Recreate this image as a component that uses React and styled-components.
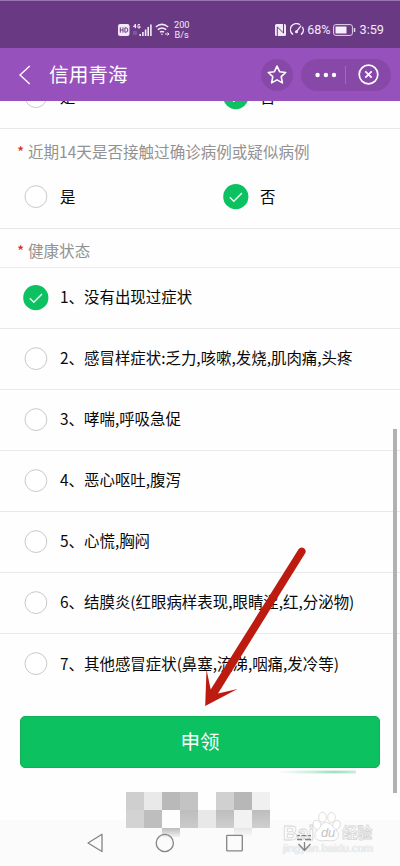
import React from "react";
import styled, { createGlobalStyle } from "styled-components";

const GlobalStyle = createGlobalStyle`
  * { box-sizing: border-box; }
  body { margin: 0; background: #fff; font-family: "Noto Sans CJK SC", sans-serif; }
`;

const Screen = styled.div`
  position: relative;
  display: flex;
  flex-direction: column;
  width: 400px;
  height: 866px;
  overflow: hidden;
  background: #fefefe;
`;

const StatusBar = styled.div`
  display: flex;
  flex: none;
  align-items: center;
  height: 48px;
  padding: 10px 16px 0 118px;
  border-top: 1px solid #9b74b3;
  background: #693a83;
  color: #f3e9f8;
`;

const StatusIcon = styled.svg`
  flex: none;
  display: block;
  margin-right: ${(p) => p.$gap || 0}px;
`;

const NetSpeed = styled.div`
  font: 9.2px/10px Roboto, sans-serif;
  text-align: center;
  margin-right: auto;
`;

const StatusText = styled.span`
  font: ${(p) => p.$size}px/16px Roboto, sans-serif;
  margin-right: ${(p) => p.$gap || 0}px;
`;

const Header = styled.header`
  display: flex;
  flex: none;
  align-items: center;
  height: 53px;
  padding: 0 9px 0 18px;
  background: #9751bc;
  color: #fff;
`;

const Title = styled.h1`
  flex: 1;
  margin: -2px 0 0 17px;
  font-size: 19.7px;
  line-height: 28px;
  font-weight: 400;
`;

const RoundButton = styled.button`
  display: grid;
  place-items: center;
  width: 32px;
  height: 32px;
  padding: 0;
  border: 0;
  border-radius: 50%;
  margin-right: 8px;
  background: #8748a8;
`;

const Capsule = styled.div`
  display: flex;
  align-items: center;
  justify-content: space-between;
  width: 90px;
  height: 32px;
  padding: 0 12px 0 14px;
  border-radius: 16px;
  background: #8748a8;
`;

const Divider = styled.span`
  width: 1px;
  height: 18px;
  margin-left: -5px;
  background: #a06abe;
`;

const Form = styled.main`
  flex: none;
  height: 719px;
  overflow: hidden;
`;

const ChoicePair = styled.div`
  display: grid;
  grid-template-columns: 200px 200px;
  align-items: center;
  height: ${(p) => p.$height}px;
  margin-top: ${(p) => p.$shift || 0}px;
  border-bottom: 1px solid #e8e8e8;
`;

const FieldLabel = styled.div`
  display: flex;
  align-items: center;
  height: ${(p) => p.$height}px;
  padding: ${(p) => p.$top || 0}px 0 0 17px;
  border-bottom: ${(p) => (p.$line ? "1px solid #ebebeb" : "0")};
  color: #929292;
  font-size: 15.55px;
  line-height: 22px;
  white-space: nowrap;
`;

const Required = styled.span`
  width: 11px;
  color: #d92a25;
`;

const Option = styled.label`
  display: flex;
  align-items: center;
  height: ${(p) => p.$height || "auto"};
  padding: 0 0 1px 23px;
  border-bottom: ${(p) => (p.$line ? "1px solid #e9e9e9" : "0")};
  color: #080808;
  font-size: 15.45px;
  line-height: 22px;
  white-space: nowrap;
`;

const OptionText = styled.span`
  margin: -3px 0 0 11px;
`;

const SubmitButton = styled.button`
  display: block;
  width: 360px;
  height: 52px;
  margin: 21px 20px 0;
  padding: 0 0 2px;
  border: 1px solid #12ae58;
  border-radius: 5px;
  background: #0bc160;
  color: #fff;
  font: 19.5px/28px "Noto Sans CJK SC", sans-serif;
`;

const NavBar = styled.nav`
  display: flex;
  align-items: center;
  flex: none;
  height: 46px;
  background: #fbfbfb;
`;

const NavIcons = styled.svg`
  position: relative;
  z-index: 2;
`;

const Glow = styled.div`
  position: absolute;
  left: 250px;
  top: 769px;
  width: 106px;
  height: 5px;
  background: radial-gradient(ellipse 60px 2.5px at 80% 60%, #7ad8a5 0, #c9efdb 40%, #fefefe00 100%);
`;

const ScrollThumb = styled.div`
  position: absolute;
  left: 393px;
  top: 429px;
  width: 4px;
  height: 364px;
  background: #b1b1b1;
`;

const Overlay = styled.svg`
  position: absolute;
  left: ${(p) => p.$x}px;
  top: ${(p) => p.$y}px;
  pointer-events: none;
`;

const Mosaic = styled.div`
  position: absolute;
  left: 126px;
  top: 792px;
  display: grid;
  grid-template-columns: repeat(8, 18px);
  grid-template-rows: 18px 18px 9px;
`;

const Tile = styled.i`
  background: ${(p) => p.$fill};
`;

const Watermark = styled.div`
  position: absolute;
  left: 283px;
  top: 811px;
  width: 92px;
  height: 43px;
  color: #fff;
`;

const Brand = styled.div`
  display: flex;
  align-items: center;
  height: 31px;
  padding-top: 12px;
  font: 700 20px/20px "Liberation Sans", "Noto Sans CJK SC", sans-serif;
  -webkit-text-stroke: 0.8px #d6d6d6;
`;

const PawText = styled.span`
  width: 28px;
  text-align: center;
  font-size: 13px;
  font-style: italic;
  font-weight: 400;
  color: #c4c4c4;
  -webkit-text-stroke: 0;
`;

const Experience = styled.span`
  font-size: 15px;
`;

const Site = styled.div`
  font: 11.2px/12px "Liberation Sans", sans-serif;
  white-space: nowrap;
  color: #f4f4f4;
  text-shadow: 0 0 1px #ccc, 0 0 1px #ddd;
`;

const tiles = [
  "#cfcfcf", "#e9e9e9", "#b9b9b9", "#c3c3c3", "transparent", "#d0d0d0", "#b7b7b7", "#f0f0f0",
  "#d3d3d3", "#bebebe", "#fdfdfd", "linear-gradient(#bdbdbd,#cbcbcb)", "#e8e8e8", "linear-gradient(#bdbdbd,#cfcfcf)", "#f2f2f2", "linear-gradient(#bcbcbc,#d0d0d0)",
  "transparent", "transparent", "linear-gradient(#bcbcbc,#f2f2f2)", "transparent", "transparent", "transparent", "linear-gradient(#e6e6e6,#fafafa)", "transparent",
];

const symptoms = [
  "1、没有出现过症状",
  "2、感冒样症状:乏力,咳嗽,发烧,肌肉痛,头疼",
  "3、哮喘,呼吸急促",
  "4、恶心呕吐,腹泻",
  "5、心慌,胸闷",
  "6、结膜炎(红眼病样表现,眼睛涩,红,分泌物)",
  "7、其他感冒症状(鼻塞,流涕,咽痛,发冷等)",
];

function Radio({ checked }) {
  return (
    <svg width="26" height="26" viewBox="0 0 26 26" fill="none">
      {checked ? (
        <>
          <circle cx="12.8" cy="12.7" r="12.6" fill="#0bc160" />
          <path d="M6.8 13.3l4 4 8.2-8.2" stroke="#f2fff7" strokeWidth="1.4" />
        </>
      ) : (
        <circle cx="12.9" cy="12.6" r="10.9" fill="#fff" stroke="#c9c9c9" />
      )}
    </svg>
  );
}

function Choice({ text, checked, height, line }) {
  return (
    <Option $height={height} $line={line}>
      <Radio checked={checked} />
      <OptionText>{text}</OptionText>
    </Option>
  );
}

function Status() {
  return (
    <StatusBar>
      <StatusIcon width="12" height="12" viewBox="0 0 12 12" $gap={3}>
        <rect width="11.5" height="12" rx="2.2" fill="#f3e9f8" />
        <path d="M2.3 3.3v5.4M5 3.3v5.4M2.3 6H5M6.9 3.8v4.4h1q1.9 0 1.9-2.2t-1.9-2.2z" stroke="#693a83" fill="none" />
      </StatusIcon>
      <StatusIcon width="19" height="14" viewBox="0 0 19 14" $gap={3} fill="none" stroke="#f3e9f8">
        <path d="M2.5 5.2V1L.4 3.7h2.9M7 1.6H5v3.3h2V3.3H6" />
        <path d="M1 8v4M3 8v4" opacity=".35" />
        <path d="M7.2 11v2M9.9 9v4M12.6 6.5V13M15.2 4V13M17.9 1.5V13" strokeWidth="1.6" />
      </StatusIcon>
      <StatusIcon width="15" height="13" viewBox="0 0 15 13" $gap={4} fill="none" stroke="#f3e9f8" strokeWidth="1.5">
        <path d="M.8 4q6-5.2 12.4 0M2.8 6.7q4.2-3.5 8.4 0M5 9.2q2-1.6 4 0" />
        <circle cx="7" cy="11.3" r=".8" fill="#f3e9f8" stroke="none" />
        <path d="M10 11h4M12.5 9.5L14 11l-1.5 1.5" strokeWidth="1" />
      </StatusIcon>
      <NetSpeed>200<br />B/s</NetSpeed>
      <StatusIcon width="11" height="12" viewBox="0 0 11 12" $gap={4}>
        <rect width="11" height="12" rx="1.5" fill="#f3e9f8" />
        <path d="M2.3 12V3l6.2 6V0" fill="none" stroke="#693a83" strokeWidth="1" />
      </StatusIcon>
      <StatusIcon width="14" height="13" viewBox="0 0 14 13" $gap={3} fill="none" stroke="#f3e9f8" strokeWidth="1.3">
        <path d="M2.8 11.5A6 6 0 0 1 10 1.7M12.3 3.8a6 6 0 0 1-1.1 7.7M1 9l2 2.6M13 9l-2 2.6M6.2 9l4.9-6.3" />
        <circle cx="6.5" cy="8.8" r=".9" />
      </StatusIcon>
      <StatusText $size={12.6} $gap={2}>68%</StatusText>
      <StatusIcon width="23" height="12" viewBox="0 0 23 12" $gap={4} fill="none" stroke="#e5d6ed">
        <rect x=".6" y=".6" width="18.8" height="10.8" rx="2.2" />
        <rect x="2.5" y="2.5" width="11" height="7" fill="#f6effa" stroke="none" />
        <path d="M21.5 4v4" strokeWidth="1.5" />
      </StatusIcon>
      <StatusText $size={12.7}>3:59</StatusText>
    </StatusBar>
  );
}

function Navigation() {
  return (
    <NavBar>
      <NavIcons width="400" height="46" viewBox="0 0 400 46" fill="none" stroke="#858585" strokeWidth="1.3">
        <path d="M88 23l14-8.7v17.2z" strokeLinejoin="round" />
        <circle cx="164.8" cy="23" r="8.6" />
        <rect x="226.7" y="15.3" width="15.6" height="15.6" rx=".7" />
        <path d="M297 15.7h3M301.5 15.7h5M308 15.7h3M297 19.5h5M305 19.5h6M304.5 22v8M298.5 24l6 6.5 6-6.5" />
      </NavIcons>
    </NavBar>
  );
}

export default function App() {
  return (
    <>
      <GlobalStyle />
      <Screen lang="zh-CN">
        <Status />
        <Header>
          <svg width="14" height="20" viewBox="0 0 14 20" fill="none" stroke="#fff" strokeWidth="1.4">
            <path d="M11.7 1L2 10l9.7 9" />
          </svg>
          <Title>信用青海</Title>
          <RoundButton aria-label="收藏">
            <svg width="20" height="20" viewBox="0 0 20 20" fill="none" stroke="#fff" strokeWidth="1.6" strokeLinejoin="round">
              <path d="M10 1.1l2.6 5.6 6.1.8-4.5 4.2 1.2 6.2-5.4-3-5.4 3 1.2-6.2L1.3 7.5l6.1-.8z" />
            </svg>
          </RoundButton>
          <Capsule>
            <svg width="22" height="6" viewBox="0 0 22 6" fill="#fff">
              <circle cx="2.6" cy="3" r="2.2" /><circle cx="10.9" cy="3" r="2.2" /><circle cx="19" cy="3" r="2.2" />
            </svg>
            <Divider />
            <svg width="21" height="21" viewBox="0 0 21 21" fill="none" stroke="#fff" strokeWidth="1.7">
              <circle cx="10.5" cy="10.5" r="9.3" />
              <path d="M7.3 7.3l6.4 6.4M13.7 7.3l-6.4 6.4" />
            </svg>
          </Capsule>
        </Header>
        <Form>
          <ChoicePair $height={62} $shift={-34}>
            <Choice text="是" />
            <Choice text="否" checked />
          </ChoicePair>
          <FieldLabel $height={38} $top={6}><Required>*</Required>近期14天是否接触过确诊病例或疑似病例</FieldLabel>
          <ChoicePair $height={62}>
            <Choice text="是" />
            <Choice text="否" checked />
          </ChoicePair>
          <FieldLabel $height={39} $top={4} $line><Required>*</Required>健康状态</FieldLabel>
          {symptoms.map((text, i) => (
            <Choice key={text} text={text} checked={i === 0} height="61px" line={i < 6} />
          ))}
          <SubmitButton>申领</SubmitButton>
        </Form>
        <Navigation />
        <Glow />
        <ScrollThumb />
        <Mosaic>{tiles.map((fill, i) => <Tile key={i} $fill={fill} />)}</Mosaic>
        <Overlay $x={0} $y={811} width="400" height="50" fill="#fff" stroke="#d6d6d6" strokeWidth=".8">
          <ellipse cx="317" cy="14" rx="3.8" ry="5" transform="rotate(-25 317 14)" />
          <ellipse cx="322.5" cy="6.2" rx="3.8" ry="5" />
          <ellipse cx="331.5" cy="6.4" rx="3.8" ry="5" />
          <ellipse cx="336.5" cy="14" rx="3.6" ry="4.8" transform="rotate(25 336.5 14)" />
          <path d="M326.5 11.5q4.500 0 7 5 6.500 5 4.500 10-2 4.500-11 3-9 1.500-12-3-1.500-5 5-10 2-5 6.500-5z" />
        </Overlay>
        <Watermark>
          <Brand>Bai<PawText>du</PawText><Experience>经验</Experience></Brand>
          <Site>jingyan.baidu.com</Site>
        </Watermark>
        <Overlay $x={195} $y={540} width="120" height="172">
          <path d="M103.7 9Q106 6.3 109.200 8.400Q111.800 10.400 110 13.600L23 153.400L42.500 149L10.200 166L11.500 129.500L15.700 149.500Z" fill="#bd1b10" />
        </Overlay>
      </Screen>
    </>
  );
}
